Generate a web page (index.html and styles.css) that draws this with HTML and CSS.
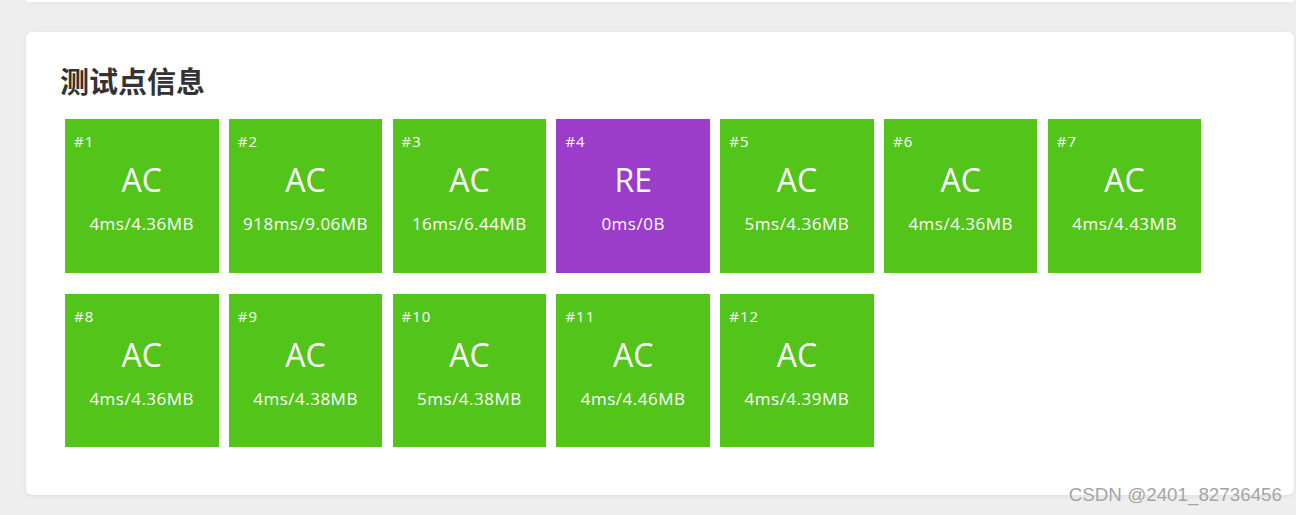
FILE: index.html
```html
<!DOCTYPE html>
<html lang="zh-CN">
<head>
    <meta charset="UTF-8">
    <meta name="viewport" content="width=device-width, initial-scale=1.0">
    <title>测试点信息</title>
    <link rel="stylesheet" href="styles.css">
</head>
<body>
    <div class="page">
        <div class="prev-card"></div>

        <div class="card">
            <h2 class="card-title">测试点信息</h2>
            <div class="cases">
                <div class="case ac"><span class="case-id">#1</span><span class="case-status">AC</span><span class="case-usage">4ms/4.36MB</span></div>
                <div class="case ac"><span class="case-id">#2</span><span class="case-status">AC</span><span class="case-usage">918ms/9.06MB</span></div>
                <div class="case ac"><span class="case-id">#3</span><span class="case-status">AC</span><span class="case-usage">16ms/6.44MB</span></div>
                <div class="case re"><span class="case-id">#4</span><span class="case-status">RE</span><span class="case-usage">0ms/0B</span></div>
                <div class="case ac"><span class="case-id">#5</span><span class="case-status">AC</span><span class="case-usage">5ms/4.36MB</span></div>
                <div class="case ac"><span class="case-id">#6</span><span class="case-status">AC</span><span class="case-usage">4ms/4.36MB</span></div>
                <div class="case ac"><span class="case-id">#7</span><span class="case-status">AC</span><span class="case-usage">4ms/4.43MB</span></div>
                <div class="case ac"><span class="case-id">#8</span><span class="case-status">AC</span><span class="case-usage">4ms/4.36MB</span></div>
                <div class="case ac"><span class="case-id">#9</span><span class="case-status">AC</span><span class="case-usage">4ms/4.38MB</span></div>
                <div class="case ac"><span class="case-id">#10</span><span class="case-status">AC</span><span class="case-usage">5ms/4.38MB</span></div>
                <div class="case ac"><span class="case-id">#11</span><span class="case-status">AC</span><span class="case-usage">4ms/4.46MB</span></div>
                <div class="case ac"><span class="case-id">#12</span><span class="case-status">AC</span><span class="case-usage">4ms/4.39MB</span></div>
            </div>
        </div>
    </div>

    <div class="watermark">CSDN @2401_82736456</div>
</body>
</html>
```

FILE: styles.css
```css
body {
    margin: 0;
    background-color: #eeeeee;
    font-family: "Open Sans", "Noto Sans", sans-serif;
    height: 515px;
    overflow: hidden;
}

.page {
    padding: 0 2px 0 26px;
}

/* bottom edge of the card above, scrolled off */
.prev-card {
    height: 2px;
    background-color: #fff;
    border-radius: 0 0 6px 6px;
    box-shadow: 0 1px 4px rgba(0, 0, 0, 0.08);
}

.card {
    margin-top: 30px;
    background-color: #fff;
    border-radius: 6px;
    box-shadow: 0 1px 4px rgba(0, 0, 0, 0.08);
    padding: 28px 34px 48px;
}

.card-title {
    margin: 0 0 19px;
    font-family: "Noto Sans CJK SC", sans-serif;
    font-size: 29px;
    line-height: 40px;
    font-weight: 700;
    color: #333;
}

.cases {
    display: flex;
    flex-wrap: wrap;
    column-gap: 10.3px;
    row-gap: 21px;
    padding-left: 5px;
}

.case {
    width: 153.5px;
    height: 153.5px;
    box-sizing: border-box;
    padding-top: 12px;
    display: flex;
    flex-direction: column;
    align-items: center;
    color: #fff;
}

.case.ac {
    background-color: #52c41a;
}

.case.re {
    background-color: #9c3ccb;
}

.case-id {
    align-self: flex-start;
    padding-left: 9px;
    font-size: 15px;
    line-height: 20px;
    letter-spacing: 1px;
}

.case-status {
    margin-top: 10px;
    font-size: 32px;
    line-height: 38px;
}

.case-usage {
    margin-top: 14px;
    font-size: 17px;
    line-height: 22px;
    letter-spacing: 0.5px;
}

.watermark {
    position: absolute;
    right: 14px;
    top: 484px;
    font-family: "Liberation Sans", Arial, sans-serif;
    font-size: 18.8px;
    color: #a3a3a3;
    text-shadow: 0 0 1px #fff;
}
```
